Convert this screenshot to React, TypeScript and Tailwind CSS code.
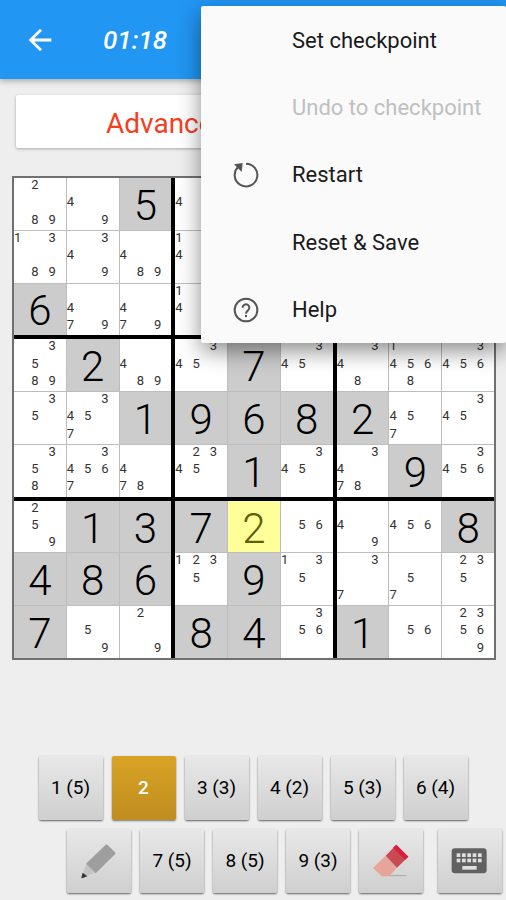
import type { ReactNode } from 'react';

// '=' marks a given digit, '*' the selected entry, anything else is a list of pencil marks
const rows = [
  ['289', '49', '=5', '4', '', '', '', '', ''],
  ['1389', '349', '489', '14', '', '', '', '', ''],
  ['=6', '479', '479', '14', '', '', '', '', ''],
  ['3589', '=2', '489', '345', '=7', '345', '348', '14568', '3456'],
  ['35', '3457', '=1', '=9', '=6', '=8', '=2', '457', '345'],
  ['358', '34567', '478', '2345', '=1', '345', '3478', '=9', '3456'],
  ['259', '=1', '=3', '=7', '*2', '56', '49', '456', '=8'],
  ['=4', '=8', '=6', '1235', '=9', '135', '37', '57', '235'],
  ['=7', '59', '29', '=8', '=4', '356', '=1', '56', '23569'],
];

const digits = ['1', '2', '3', '4', '5', '6', '7', '8', '9'];
const thirds = [0, 1, 2];

function Cell({ value }: { value: string }) {
  if (value.startsWith('*')) {
    return (
      <button className="flex items-center justify-center min-w-0 min-h-0 overflow-hidden pt-1 bg-[#ffff99] text-[42px] leading-none font-light text-[#5f5f08]">
        {value[1]}
      </button>
    );
  }

  if (value.startsWith('=')) {
    return (
      <button className="flex items-center justify-center min-w-0 min-h-0 overflow-hidden pt-1 bg-[#cccccc] text-[42px] leading-none font-light text-black">
        {value[1]}
      </button>
    );
  }

  return (
    <button className="grid grid-cols-3 grid-rows-3 min-w-0 min-h-0 overflow-hidden bg-white text-left text-[13px] leading-[14px] text-[#333333]">
      {digits.map((digit) => (
        <span key={digit}>{value.includes(digit) ? digit : ''}</span>
      ))}
    </button>
  );
}

function Board() {
  return (
    <div className="grid grid-cols-3 grid-rows-3 gap-1 ml-3 mr-[10px] mt-7 aspect-square border-2 border-[#707070] bg-black">
      {thirds.map((boxRow) =>
        thirds.map((boxCol) => (
          <div
            key={`${boxRow}-${boxCol}`}
            className="grid grid-cols-3 grid-rows-3 gap-px min-w-0 min-h-0 bg-[#bdbdbd]"
          >
            {thirds.map((r) =>
              thirds.map((c) => (
                <Cell key={`${r}-${c}`} value={rows[boxRow * 3 + r][boxCol * 3 + c]} />
              ))
            )}
          </div>
        ))
      )}
    </div>
  );
}

function RestartIcon() {
  return (
    <svg viewBox="0 0 78 78" className="w-[26px] h-[26px]" aria-hidden="true">
      <path d="M39 5A34 34 0 1 1 15 15" fill="none" stroke="#555555" strokeWidth="6" />
      <path d="M3 7L29 3L26 30Z" fill="#555555" />
    </svg>
  );
}

function HelpIcon() {
  return (
    <svg viewBox="0 0 78 78" className="w-[26px] h-[26px]" aria-hidden="true">
      <g fill="none" stroke="#555555" strokeWidth="6">
        <circle cx="39" cy="39" r="34" />
        <path d="M29 32a10 10 0 1 1 16 8c-4 3-6 5-6 10" />
      </g>
      <rect x="36" y="54" width="6" height="6" fill="#555555" />
    </svg>
  );
}

interface MenuItemProps {
  label: string;
  icon?: ReactNode;
  disabled?: boolean;
}

function MenuItem({ label, icon, disabled }: MenuItemProps) {
  return (
    <button
      role="menuitem"
      disabled={disabled}
      className="flex items-center gap-[33px] pl-8 pt-px text-left text-[22px] text-[#1a1a1a] whitespace-nowrap disabled:text-[#c0c0c0]"
    >
      <span className="w-[26px] shrink-0">{icon}</span>
      {label}
    </button>
  );
}

function OverflowMenu() {
  return (
    <div
      role="menu"
      className="absolute top-[6px] right-0 z-10 grid auto-rows-fr w-[305px] h-[337px] rounded-xs bg-[#fafafa] shadow-[0_8px_22px_rgba(0,0,0,0.45)]"
    >
      <MenuItem label="Set checkpoint" />
      <MenuItem label="Undo to checkpoint" disabled />
      <MenuItem label="Restart" icon={<RestartIcon />} />
      <MenuItem label="Reset &amp; Save" />
      <MenuItem label="Help" icon={<HelpIcon />} />
    </div>
  );
}

interface KeyProps {
  children: ReactNode;
  label?: string;
  active?: boolean;
}

function Key({ children, label, active }: KeyProps) {
  return (
    <button
      aria-label={label}
      className={
        active
          ? 'flex items-center justify-center w-16 h-16 shrink-0 rounded-xs bg-linear-to-b from-[#d9a324] to-[#bf8d20] text-[19px] font-medium text-white shadow-[0_1px_2px_rgba(0,0,0,0.5)]'
          : 'flex items-center justify-center w-16 h-16 shrink-0 rounded-xs bg-linear-to-b from-[#e8e8e8] to-[#cfcfcf] text-[19px] text-black shadow-[0_1px_2px_rgba(0,0,0,0.6)]'
      }
    >
      {children}
    </button>
  );
}

function PencilIcon() {
  return (
    <svg viewBox="0 0 192 192" className="w-16 h-16" aria-hidden="true">
      <path d="M58 104L84 131L46 147L44 145Z" fill="#c6c4c2" />
      <path d="M47 131L61 142L45 148L43 146Z" fill="#333333" />
      <path d="M116 47Q119 45 122 48L144 70Q147 73 144 76L86 133L57 104Z" fill="#9e9e9e" />
    </svg>
  );
}

function EraserIcon() {
  return (
    <svg viewBox="0 0 192 192" className="w-16 h-16" aria-hidden="true">
      <path d="M88 140H143" stroke="#a8a8a8" strokeWidth="3" />
      <path d="M80 80L114 116L90 142H68L42 117Z" fill="#e5a699" />
      <path d="M112 47L148 83L114 116L80 80Z" fill="#c94a55" />
      <path d="M112 47L148 83L138 92L102 56Z" fill="#d6203f" />
    </svg>
  );
}

function KeyboardIcon() {
  return (
    <svg viewBox="0 0 192 192" className="w-16 h-16" aria-hidden="true">
      <rect x="41" y="58" width="105" height="75" rx="10" fill="#616161" />
      <g fill="#e0e0e0">
        {[56, 72, 88, 104, 120].map((x) => (
          <g key={x}>
            <rect x={x} y="73" width="11" height="11" />
            <rect x={x} y="89" width="11" height="11" />
          </g>
        ))}
        <rect x="73" y="111" width="43" height="11" />
      </g>
    </svg>
  );
}

function Keypad() {
  return (
    <div className="flex flex-col gap-[9px] mt-auto pt-6 pb-[7px]">
      <div className="flex justify-center gap-[9px]">
        <Key>1 (5)</Key>
        <Key active>2</Key>
        <Key>3 (3)</Key>
        <Key>4 (2)</Key>
        <Key>5 (3)</Key>
        <Key>6 (4)</Key>
      </div>
      <div className="flex justify-end gap-[15px] pr-1">
        <div className="flex gap-[9px]">
          <Key label="Pencil">
            <PencilIcon />
          </Key>
          <Key>7 (5)</Key>
          <Key>8 (5)</Key>
          <Key>9 (3)</Key>
          <Key label="Erase">
            <EraserIcon />
          </Key>
        </div>
        <Key label="Keyboard">
          <KeyboardIcon />
        </Key>
      </div>
    </div>
  );
}

export default function App() {
  return (
    <div className="relative flex flex-col min-h-screen overflow-hidden bg-[#eeeeee] font-['Roboto',sans-serif]">
      <header className="flex items-center gap-[46px] h-[79px] pl-[23px] bg-[#2196f3] text-white shadow-[0_2px_6px_rgba(0,0,0,0.3)]">
        <button aria-label="Back">
          <svg viewBox="0 0 24 24" className="w-[34px] h-[34px]" aria-hidden="true">
            <path d="M20 11H7.83l5.59-5.59L12 4l-8 8 8 8 1.41-1.41L7.83 13H20z" fill="currentColor" />
          </svg>
        </button>
        <time className="text-[26px] leading-none font-medium italic">01:18</time>
      </header>
      <main className="flex flex-col grow">
        <h1 className="flex items-center h-[53px] mx-4 mt-4 pl-[90px] pt-1 rounded-xs bg-white text-[28px] text-[#f4401c] shadow-[0_1px_3px_rgba(0,0,0,0.3)]">
          Advanced
        </h1>
        <Board />
        <Keypad />
      </main>
      <OverflowMenu />
    </div>
  );
}
